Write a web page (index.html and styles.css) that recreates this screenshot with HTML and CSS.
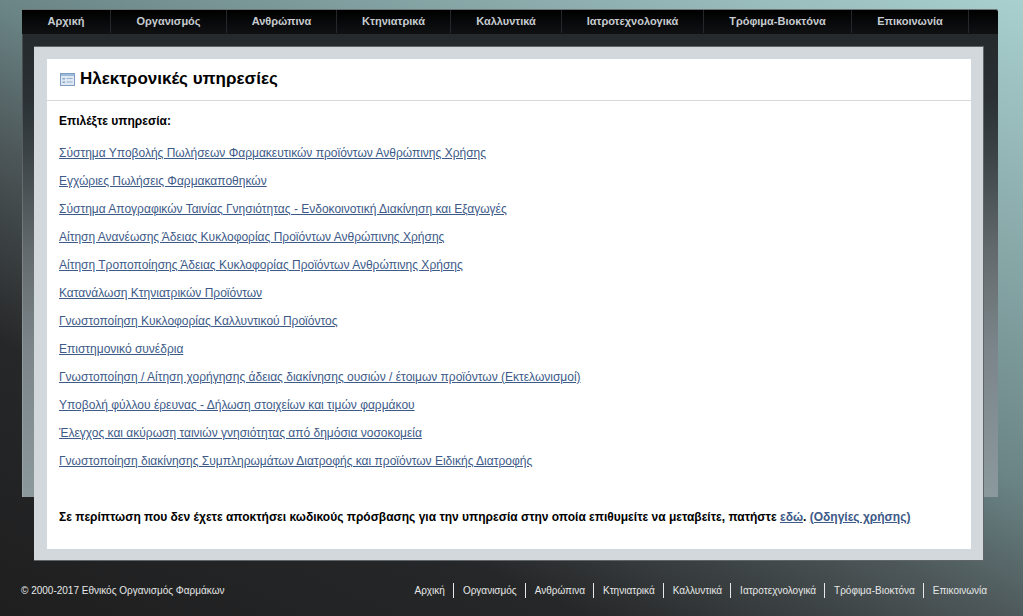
FILE: index.html
```html
<!DOCTYPE html>
<html lang="el">
<head>
<meta charset="utf-8">
<title>Ηλεκτρονικές υπηρεσίες</title>
<link rel="stylesheet" href="styles.css">
</head>
<body>
<div class="wrap">
  <nav class="nav">
    <a href="#">Αρχική</a><a href="#">Οργανισμός</a><a href="#">Ανθρώπινα</a><a href="#">Κτηνιατρικά</a><a href="#">Καλλυντικά</a><a href="#">Ιατροτεχνολογικά</a><a href="#">Τρόφιμα-Βιοκτόνα</a><a href="#">Επικοινωνία</a>
  </nav>
  <div class="panel">
    <main class="card">
      <header class="head">
        <svg class="icon" width="15" height="13" viewBox="0 0 15 13">
          <rect x="0.5" y="0.5" width="14" height="12" fill="#dfe8f2" stroke="#7e9dc2"/>
          <rect x="1" y="1" width="13" height="2" fill="#9dbadb"/>
          <rect x="2.5" y="5" width="2.5" height="1.5" fill="#8aa6c8"/>
          <rect x="2.5" y="8.5" width="2.5" height="1.5" fill="#8aa6c8"/>
          <path d="M6.5 5.5H12.5M6.5 9H12.5" stroke="#9ab1cd"/>
        </svg>
        <h1>Ηλεκτρονικές υπηρεσίες</h1>
      </header>
      <div class="body">
        <p class="lead">Επιλέξτε υπηρεσία:</p>
        <ul class="links">
          <li><a href="#">Σύστημα Υποβολής Πωλήσεων Φαρμακευτικών προϊόντων Ανθρώπινης Χρήσης</a></li>
          <li><a href="#">Εγχώριες Πωλήσεις Φαρμακαποθηκών</a></li>
          <li><a href="#">Σύστημα Απογραφικών Ταινίας Γνησιότητας - Ενδοκοινοτική Διακίνηση και Εξαγωγές</a></li>
          <li><a href="#">Αίτηση Ανανέωσης Άδειας Κυκλοφορίας Προϊόντων Ανθρώπινης Χρήσης</a></li>
          <li><a href="#">Αίτηση Τροποποίησης Άδειας Κυκλοφορίας Προϊόντων Ανθρώπινης Χρήσης</a></li>
          <li><a href="#">Κατανάλωση Κτηνιατρικών Προϊόντων</a></li>
          <li><a href="#">Γνωστοποίηση Κυκλοφορίας Καλλυντικού Προϊόντος</a></li>
          <li><a href="#">Επιστημονικό συνέδρια</a></li>
          <li><a href="#">Γνωστοποίηση / Αίτηση χορήγησης άδειας διακίνησης ουσιών / έτοιμων προϊόντων (Εκτελωνισμοί)</a></li>
          <li><a href="#">Υποβολή φύλλου έρευνας - Δήλωση στοιχείων και τιμών φαρμάκου</a></li>
          <li><a href="#">Έλεγχος και ακύρωση ταινιών γνησιότητας από δημόσια νοσοκομεία</a></li>
          <li><a href="#">Γνωστοποίηση διακίνησης Συμπληρωμάτων Διατροφής και προϊόντων Ειδικής Διατροφής</a></li>
        </ul>
        <p class="note">Σε περίπτωση που δεν έχετε αποκτήσει κωδικούς πρόσβασης για την υπηρεσία στην οποία επιθυμείτε να μεταβείτε, πατήστε <a href="#" class="plain">εδώ</a>. <a href="#">(Οδηγίες χρήσης)</a></p>
      </div>
    </main>
  </div>
</div>
<footer class="foot">
  <span class="copy">© 2000-2017 Εθνικός Οργανισμός Φαρμάκων</span>
  <nav class="foot-nav">
    <a href="#">Αρχική</a><a href="#">Οργανισμός</a><a href="#">Ανθρώπινα</a><a href="#">Κτηνιατρικά</a><a href="#">Καλλυντικά</a><a href="#">Ιατροτεχνολογικά</a><a href="#">Τρόφιμα-Βιοκτόνα</a><a href="#">Επικοινωνία</a>
  </nav>
</footer>
</body>
</html>
```
FILE: styles.css
```css
* { box-sizing: border-box; }
html { height: 100%; }
body {
  margin: 0;
  height: 616px;
  overflow: hidden;
  font-family: "Liberation Sans", Arial, sans-serif;
  font-size: 12px;
  color: #000;
  background: linear-gradient(25deg, #1f1f20 0%, #262728 25%, #4d5759 43%, #6b8586 56%, #a9cfcf 100%);
}
.wrap {
  position: relative;
  margin: 9px 25px 0 22px;
}
.wrap::before {
  content: "";
  position: absolute;
  left: 0; right: 0; top: 0;
  height: 488px;
  border-radius: 0 3px 0 0;
  border-left: 1px solid rgba(255, 255, 255, 0.16);
  background: linear-gradient(to bottom, #22272a 0%, #2a3033 18%, #3a4246 29%, #62696c 49%, #7c868a 70%, #8b989c 100%);
}
.nav {
  position: relative;
  display: grid;
  grid-template-columns: 89px 116px 110px 114px 111px 142px 148px 117px 1fr;
  height: 25px;
  background: linear-gradient(to bottom, #000 0%, #0f1113 100%);
  border-top: 1px solid #6c7476;
  border-radius: 0 3px 0 0;
}
.nav a {
  height: 23px;
  line-height: 23px;
  text-align: center;
  font-size: 11px;
  color: #c6ccd0;
  font-weight: bold;
  text-decoration: none;
  border-right: 1px solid #24282b;
  white-space: nowrap;
}
.panel {
  position: relative;
  margin: 12px 14px 0 12px;
  padding: 12px 12px 11px 13px;
  background: #d3d8dc;
  border-bottom: 1px solid #5f6568;
  border-right: 1px solid #5f6568;
  border-top: 1px solid #5f6568;
}
.card { background: #fff; height: 490px; }
.head {
  display: flex;
  align-items: center;
  gap: 5px;
  height: 42px;
  padding: 0 0 1px 13px;
  border-bottom: 1px solid #d8d8d8;
}
.icon { flex: none; margin-top: 1px; }
h1 {
  margin: 0;
  font-size: 17px;
  font-weight: bold;
  color: #000;
  white-space: nowrap;
}
.body { padding: 12px 12px 0; }
.lead { margin: 0; font-weight: bold; line-height: 16px; }
.links { list-style: none; margin: 16px 0 0; padding: 0; }
.links li { height: 28px; line-height: 16px; }
.body a { color: #3d5a88; }
.note { margin: 28px 0 0; font-weight: bold; line-height: 16px; white-space: nowrap; }
.foot {
  display: flex;
  justify-content: space-between;
  align-items: center;
  height: 20px;
  margin: 19px 36px 0 21px;
  font-size: 10px;
  color: #e6e8e8;
}
.foot-nav { display: flex; align-items: center; }
.foot-nav a {
  color: #e6e8e8;
  line-height: 15px;
  text-decoration: none;
  padding: 0 8px 0 9px;
  border-left: 1px solid #e6e8e8;
}
.foot-nav a:first-child { border-left: 0; }
.foot-nav a:last-child { padding-right: 0; }
```
